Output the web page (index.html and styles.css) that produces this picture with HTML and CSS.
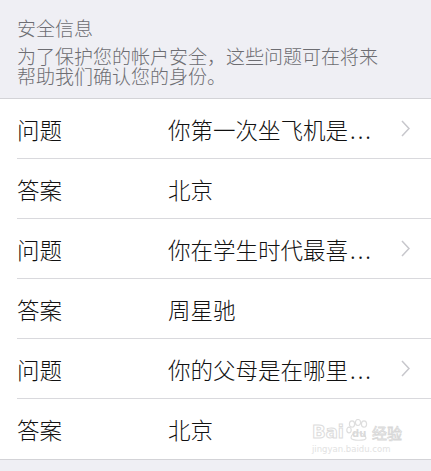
FILE: index.html
```html
<!DOCTYPE html>
<html lang="zh-CN">
<head>
<meta charset="utf-8">
<title>安全信息</title>
<link rel="stylesheet" href="styles.css">
</head>
<body>
<div class="page">
  <header class="section-head">
    <div class="section-title">安全信息</div>
    <p class="section-desc">为了保护您的帐户安全，这些问题可在将来帮助我们确认您的身份。</p>
  </header>

  <ul class="list">
    <li class="row">
      <span class="label">问题</span>
      <span class="value">你第一次坐飞机是<span class="dots">...</span></span>
      <svg class="chevron" viewBox="0 0 9 17" width="9" height="17"><path d="M1 1 L8 8.5 L1 16" fill="none" stroke="#c7c7cc" stroke-width="1.5"/></svg>
    </li>
    <li class="row">
      <span class="label">答案</span>
      <span class="value">北京</span>
    </li>
    <li class="row">
      <span class="label">问题</span>
      <span class="value">你在学生时代最喜<span class="dots">...</span></span>
      <svg class="chevron" viewBox="0 0 9 17" width="9" height="17"><path d="M1 1 L8 8.5 L1 16" fill="none" stroke="#c7c7cc" stroke-width="1.5"/></svg>
    </li>
    <li class="row">
      <span class="label">答案</span>
      <span class="value">周星驰</span>
    </li>
    <li class="row">
      <span class="label">问题</span>
      <span class="value">你的父母是在哪里<span class="dots">...</span></span>
      <svg class="chevron" viewBox="0 0 9 17" width="9" height="17"><path d="M1 1 L8 8.5 L1 16" fill="none" stroke="#c7c7cc" stroke-width="1.5"/></svg>
    </li>
    <li class="row">
      <span class="label">答案</span>
      <span class="value">北京</span>
    </li>
  </ul>

  <div class="stamp">
    <div class="stamp-top">
      <span class="stamp-bai">Bai</span>
      <span class="stamp-paw">
        <svg viewBox="0 0 24 22" width="24" height="22">
          <g fill="none" stroke="#dedede" stroke-width="1.2">
            <ellipse cx="6" cy="5" rx="2.6" ry="3.2"/>
            <ellipse cx="12" cy="3.5" rx="2.6" ry="3"/>
            <ellipse cx="18" cy="5" rx="2.6" ry="3.2"/>
            <ellipse cx="3" cy="11" rx="2.2" ry="2.8"/>
            <path d="M5 19 C5 12 19 12 20 19 C20 22 5 22 5 19 Z"/>
          </g>
        </svg>
        <span class="stamp-du">du</span>
      </span>
      <span class="stamp-cn">经验</span>
    </div>
    <div class="stamp-url">jingyan.baidu.com</div>
  </div>
</div>
</body>
</html>
```

FILE: styles.css
```css
html, body {
  margin: 0;
  padding: 0;
}

body {
  background: #efeff4;
  font-family: "Noto Sans CJK SC", "Noto Sans", sans-serif;
  width: 431px;
  height: 471px;
  overflow: hidden;
}

.page {
  position: relative;
  height: 471px;
}

.section-head {
  padding: 17px 17px 12px;
  color: #6d6d72;
  font-size: 19px;
  font-weight: 300;
}

.section-title {
  line-height: 21px;
}

.section-desc {
  margin: 8px 0 0;
  line-height: 20px;
  width: 372px;
}

.list {
  list-style: none;
  margin: 0;
  padding: 0 0 0 17px;
  background: #fff;
  border-top: 1px solid #d3d3d7;
  border-bottom: 1px solid #d3d3d7;
}

.row {
  display: flex;
  align-items: center;
  height: 60px;
  border-bottom: 1px solid #d9d9dd;
  box-sizing: border-box;
  padding-right: 21px;
  font-size: 22.5px;
  font-weight: 300;
  color: #111;
}

.row:last-child {
  border-bottom: none;
}

.label {
  width: 151px;
  flex: none;
}

.value {
  flex: 1;
  white-space: nowrap;
}

.dots {
  letter-spacing: 2px;
  margin-left: 2px;
}

.chevron {
  flex: none;
}

.stamp {
  position: absolute;
  left: 312px;
  top: 415px;
  width: 94px;
  color: #e0e0e0;
  font-family: "DejaVu Sans", sans-serif;
}

.stamp-top {
  display: flex;
  align-items: flex-end;
  height: 26px;
}

.stamp-bai {
  font-size: 18px;
  font-weight: bold;
  line-height: 18px;
  color: #fff;
  -webkit-text-stroke: 1px #dcdcdc;
}

.stamp-paw {
  position: relative;
  width: 24px;
  height: 22px;
  margin: 0 2px;
}

.stamp-paw svg {
  display: block;
}

.stamp-du {
  position: absolute;
  left: 6px;
  top: 9px;
  font-size: 10px;
  font-weight: bold;
  color: #dadada;
}

.stamp-cn {
  font-family: "Noto Sans CJK SC", sans-serif;
  font-size: 15px;
  line-height: 17px;
  color: #fff;
  -webkit-text-stroke: 0.8px #d8d8d8;
}

.stamp-url {
  font-size: 8.5px;
  line-height: 12px;
  margin-top: 2px;
  color: #e2e2e2;
}
```
